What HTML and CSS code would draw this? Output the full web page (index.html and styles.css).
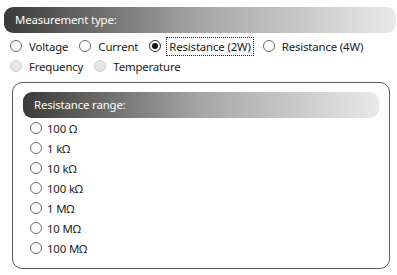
FILE: index.html
```html
<!DOCTYPE html>
<html lang="en">
  <head>
    <meta charset="UTF-8" />
    <title>Measurement settings</title>
    <link rel="stylesheet" href="styles.css">
  </head>
  <body>
    <div class="panel">
      <!-- Measurement type -->
      <div class="title-bar">Measurement type:</div>
      <div class="options">
        <div class="option-row">
          <label class="radio"><span class="dot"></span><span class="text">Voltage</span></label>
          <label class="radio"><span class="dot"></span><span class="text">Current</span></label>
          <label class="radio checked"><span class="dot"></span><span class="text focus">Resistance (2W)</span></label>
          <label class="radio"><span class="dot"></span><span class="text">Resistance (4W)</span></label>
        </div>
        <div class="option-row">
          <label class="radio disabled"><span class="dot"></span><span class="text">Frequency</span></label>
          <label class="radio disabled"><span class="dot"></span><span class="text">Temperature</span></label>
        </div>
      </div>

      <!-- Resistance range -->
      <div class="range-box">
        <div class="title-bar">Resistance range:</div>
        <div class="range-list">
          <label class="radio"><span class="dot"></span><span class="text">100 Ω</span></label>
          <label class="radio"><span class="dot"></span><span class="text">1 kΩ</span></label>
          <label class="radio"><span class="dot"></span><span class="text">10 kΩ</span></label>
          <label class="radio"><span class="dot"></span><span class="text">100 kΩ</span></label>
          <label class="radio"><span class="dot"></span><span class="text">1 MΩ</span></label>
          <label class="radio"><span class="dot"></span><span class="text">10 MΩ</span></label>
          <label class="radio"><span class="dot"></span><span class="text">100 MΩ</span></label>
        </div>
      </div>
    </div>
  </body>
</html>
```

FILE: styles.css
```css
/* Page */
html,
body {
  margin: 0;
  background-color: #fff;
  font-family: "Noto Sans", sans-serif;
  font-size: 11.4px;
  letter-spacing: -0.15px;
  color: #1a1a1a;
}
.panel {
  padding: 7px 1px 0 4px;
}
/* Gradient header bars */
.title-bar {
  height: 26px;
  line-height: 26px;
  padding-left: 11px;
  border-radius: 9px;
  background: linear-gradient(to right, #3a3a3a 0%, #a6a6a6 50%, #e9e9e9 100%);
  color: #fff;
}
/* Measurement type options */
.options {
  margin-top: 3px;
  padding-left: 6px;
}
.option-row {
  display: flex;
  gap: 11px;
  height: 20px;
  align-items: center;
}
/* Radio buttons */
.radio {
  display: flex;
  align-items: center;
  gap: 7px;
  height: 20px;
}
.dot {
  box-sizing: border-box;
  width: 12px;
  height: 12px;
  border: 1px solid #6a6a6a;
  border-radius: 50%;
  background: #fff;
  display: flex;
  justify-content: center;
  align-items: center;
}
.radio.checked .dot {
  border-color: #333;
}
.radio.checked .dot::after {
  content: "";
  width: 6px;
  height: 6px;
  border-radius: 50%;
  background: #111;
}
.radio.disabled .dot {
  background: #e6e6e6;
  border-color: #cfcfcf;
}
.text.focus {
  outline: 1px dotted #222;
  outline-offset: 1px;
  padding: 0 1px;
}
/* Resistance range group */
.range-box {
  margin: 6px 6px 0 8px;
  border: 1px solid #5a5a5a;
  border-radius: 10px;
  padding: 9px 10px 9px 10px;
  height: 167px;
}
.range-list {
  padding-left: 7px;
}
.range-list .radio {
  gap: 5px;
}
```
